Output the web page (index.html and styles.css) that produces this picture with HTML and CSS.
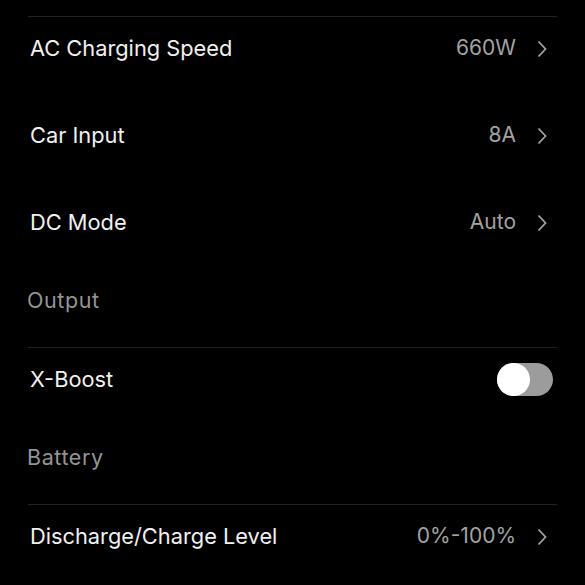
FILE: index.html
```html
<!DOCTYPE html>
<html lang="en">
<head>
  <meta charset="UTF-8">
  <title>Device Settings</title>
  <link rel="stylesheet" href="styles.css">
</head>
<body>

  <div class="settings">
    <div class="group">
      <div class="item">
        <span class="label">AC Charging Speed</span>
        <span class="value">660W</span>
        <svg class="chevron" viewBox="0 0 10 18"><path d="M1.5 1.5 L8.5 9 L1.5 16.5"/></svg>
      </div>
      <div class="item">
        <span class="label">Car Input</span>
        <span class="value">8A</span>
        <svg class="chevron" viewBox="0 0 10 18"><path d="M1.5 1.5 L8.5 9 L1.5 16.5"/></svg>
      </div>
      <div class="item">
        <span class="label">DC Mode</span>
        <span class="value">Auto</span>
        <svg class="chevron" viewBox="0 0 10 18"><path d="M1.5 1.5 L8.5 9 L1.5 16.5"/></svg>
      </div>
    </div>

    <div class="header">Output</div>
    <div class="group">
      <div class="item switch-item">
        <span class="label">X-Boost</span>
        <div class="toggle"><div class="knob"></div></div>
      </div>
    </div>

    <div class="header">Battery</div>
    <div class="group">
      <div class="item">
        <span class="label">Discharge/Charge Level</span>
        <span class="value">0%-100%</span>
        <svg class="chevron" viewBox="0 0 10 18"><path d="M1.5 1.5 L8.5 9 L1.5 16.5"/></svg>
      </div>
    </div>
  </div>

</body>
</html>
```

FILE: styles.css
```css
body {
  margin: 0;
  background: #000;
  font-family: Inter, "Noto Sans", sans-serif;
}

.settings {
  padding-top: 16px;
}

.group {
  margin: 0 28px;
  border-top: 1px solid #222;
  display: flex;
  flex-direction: column;
  gap: 24px;
}

.item {
  height: 63px;
  display: flex;
  align-items: center;
  padding: 0 10px 0 2px;
  box-sizing: border-box;
}

.label {
  flex: 1;
  color: #f0f0f0;
  font-size: 21.8px;
  padding-bottom: 2px;
}

.value {
  color: #a3a3a3;
  font-size: 21px;
  margin-right: 21px;
  padding-bottom: 2px;
}

.chevron {
  width: 10px;
  height: 18px;
  fill: none;
  stroke: #a3a3a3;
  stroke-width: 1.8;
}

.header {
  height: 93px;
  display: flex;
  align-items: center;
  padding: 0 0 2px 27px;
  box-sizing: border-box;
  color: #949494;
  font-size: 21.5px;
  letter-spacing: 0.6px;
}

.switch-item {
  padding-right: 4px;
}

.toggle {
  width: 56px;
  height: 33px;
  border-radius: 17px;
  background: #9c9c9c;
  position: relative;
}

.knob {
  position: absolute;
  left: 0;
  top: 0;
  width: 33px;
  height: 33px;
  border-radius: 50%;
  background: #fff;
}
```
